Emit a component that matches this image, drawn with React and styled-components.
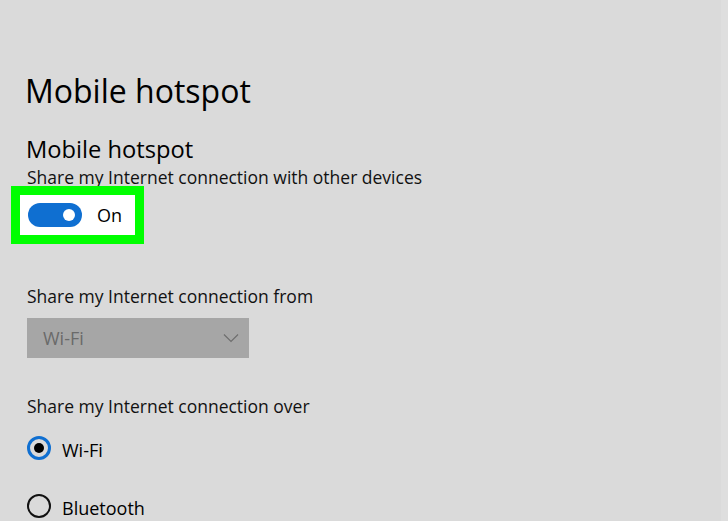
import React from "react";
import styled, { createGlobalStyle } from "styled-components";

const Global = createGlobalStyle`
  html, body { margin: 0; padding: 0; background: #dadada; }
  body { font-family: "Open Sans", "Noto Sans", sans-serif; color: #000; }
`;

const Layout = styled.div`
  display: flex;
  width: 728px;
  height: 521px;
  overflow: hidden;
  background: #dadada;
`;

const Main = styled.main`
  flex: 1;
  padding-left: 27px;
`;

const Strip = styled.div`
  width: 7px;
  background: #dedede;
`;

const Title = styled.h1`
  margin: 71px 0 0 -2px;
  font-size: 32px;
  line-height: 40px;
  font-weight: 400;
`;

const Heading = styled.h2`
  margin: 23px 0 0 -1px;
  font-size: 23.7px;
  line-height: 30px;
  font-weight: 400;
`;

const Label = styled.div`
  margin-top: ${(p) => p.$mt}px;
  font-size: 17.5px;
  line-height: 24px;
  color: #111;
`;

const Highlight = styled.div`
  display: inline-flex;
  align-items: center;
  gap: 15px;
  margin: ${(p) => p.$mt}px 0 0 -16px;
  border: 9px solid #00ff00;
  background: #fff;
  padding: 8px 13px 8px 8px;
`;

const Track = styled.div`
  position: relative;
  width: 54px;
  height: 24px;
  border-radius: 12px;
  background: #0f6fd1;
`;

const Knob = styled.span`
  position: absolute;
  right: 7px;
  top: 6px;
  width: 12px;
  height: 12px;
  border-radius: 50%;
  background: #fff;
`;

const StateText = styled.span`
  font-size: 18px;
  line-height: 24px;
`;

const Select = styled.div`
  display: flex;
  align-items: center;
  justify-content: space-between;
  box-sizing: border-box;
  width: 222px;
  height: 40px;
  margin-top: 10px;
  padding: 0 10px 0 16px;
  background: #a6a6a6;
  color: #6a6a6a;
  font-size: 18px;
`;

const RadioRow = styled.div`
  display: flex;
  align-items: flex-start;
  gap: 11px;
  margin-top: ${(p) => p.$mt}px;
`;

const Circle = styled.span`
  box-sizing: border-box;
  display: flex;
  align-items: center;
  justify-content: center;
  width: 24px;
  height: 24px;
  border-radius: 50%;
  border: ${(p) => (p.$on ? "3px solid #0f6fd1" : "2px solid #111")};
  &::after {
    content: "";
    display: ${(p) => (p.$on ? "block" : "none")};
    width: 10px;
    height: 10px;
    border-radius: 50%;
    background: #000;
  }
`;

const RadioText = styled.span`
  margin-top: 2px;
  font-size: 18px;
  line-height: 24px;
`;

export default function App() {
  return (
    <Layout>
      <Global />
      <Main>
        <Title>Mobile hotspot</Title>
        <Heading>Mobile hotspot</Heading>
        <Label $mt={1}>Share my Internet connection with other devices</Label>
        <div>
          <Highlight $mt={-3}>
            <Track>
              <Knob />
            </Track>
            <StateText>On</StateText>
          </Highlight>
        </div>
        <Label $mt={40}>Share my Internet connection from</Label>
        <Select>
          <span>Wi-Fi</span>
          <svg width="16" height="10" viewBox="0 0 16 10">
            <polyline points="1,1.5 8,8.5 15,1.5" fill="none" stroke="#6e6e6e" strokeWidth="1.2" />
          </svg>
        </Select>
        <Label $mt={36}>Share my Internet connection over</Label>
        <RadioRow $mt={18}>
          <Circle $on />
          <RadioText>Wi-Fi</RadioText>
        </RadioRow>
        <RadioRow $mt={32}>
          <Circle />
          <RadioText>Bluetooth</RadioText>
        </RadioRow>
      </Main>
      <Strip />
    </Layout>
  );
}
